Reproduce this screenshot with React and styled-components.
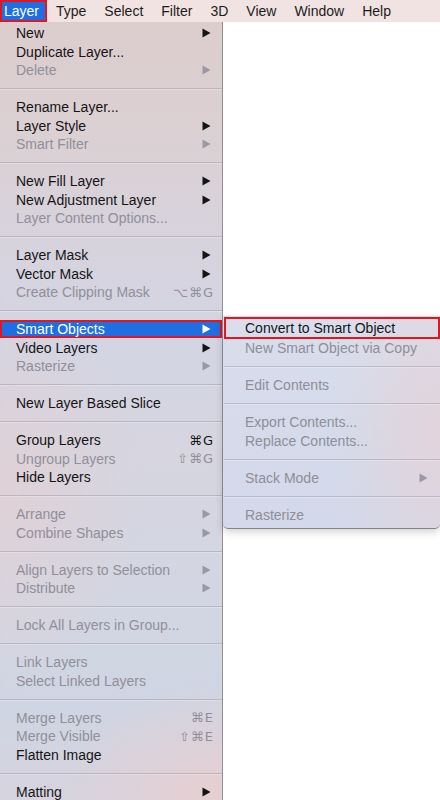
import React from "react";
import styled, { createGlobalStyle, css } from "styled-components";

const GlobalStyle = createGlobalStyle`
  html, body {
    margin: 0;
    padding: 0;
    background: #ffffff;
    overflow: hidden;
  }
  body {
    font-family: "Liberation Sans", Arial, sans-serif;
    -webkit-font-smoothing: antialiased;
  }
`;

const ROW = 18.5;
const HILITE = "#1f6fe2";
const OUTLINE = "#e3161f";

const Page = styled.div`
  width: 440px;
  height: 800px;
  display: flex;
  flex-direction: column;
  background: #ffffff;
`;

const MenuBar = styled.div`
  height: 22px;
  display: flex;
  align-items: center;
  background: #f2e3e3;
  font-size: 14px;
  color: #1c1c1c;
`;

const BarItem = styled.div`
  height: 22px;
  display: flex;
  align-items: center;
  padding: 0 9px;
  box-sizing: border-box;
  ${(p) =>
    p.$active &&
    css`
      padding: 0 8px 0 4px;
      width: 47px;
      background: ${HILITE};
      color: #ffffff;
      box-shadow: inset 0 0 0 2px ${OUTLINE};
    `}
`;

const Body = styled.div`
  flex: 1;
  display: flex;
`;

const MainMenu = styled.div`
  width: 223px;
  box-sizing: border-box;
  padding-top: 1.75px;
  border-right: 1px solid rgba(70, 60, 70, 0.45);
  background:
    radial-gradient(ellipse 160px 120px at 100% 100%, rgba(232, 206, 208, 0.95), rgba(232, 206, 208, 0)),
    radial-gradient(ellipse 140px 200px at 0% 470px, rgba(226, 208, 212, 0.8), rgba(226, 208, 212, 0)),
    linear-gradient(180deg, #dccdcd 0%, #dbd0d3 14%, #d6d3de 30%, #d3d5e3 42%, #d6d5e0 55%, #d3d6e2 72%, #cfd5e3 88%, #d6d3de 100%);
  font-size: 14px;
`;

const Row = styled.div`
  position: relative;
  height: ${ROW}px;
  display: flex;
  align-items: center;
  padding: 0 11px 0 16px;
  color: ${(p) => (p.$disabled ? "#918f9a" : "#151515")};
  white-space: nowrap;
  ${(p) =>
    p.$selected &&
    css`
      background: ${HILITE};
      color: #ffffff;
      box-shadow: inset 0 0 0 2px ${OUTLINE};
    `}
`;

const Label = styled.span`
  flex: 1;
`;

const Shortcut = styled.span`
  font-family: "DejaVu Sans", sans-serif;
  font-size: 13px;
  letter-spacing: 1px;
  margin-right: -3px;
`;

const Separator = styled.div`
  height: ${ROW}px;
  display: flex;
  align-items: center;
  &::after {
    content: "";
    flex: 1;
    height: 1px;
    background: rgba(120, 115, 130, 0.3);
    box-shadow: 0 1px 0 rgba(255, 255, 255, 0.25);
  }
`;

const SubMenu = styled.div`
  position: absolute;
  left: calc(100% + 1px);
  top: -3.75px;
  width: 217px;
  box-sizing: border-box;
  padding: 1px 0 4px 1px;
  border-radius: 0 0 5px 5px;
  border-bottom: 1px solid rgba(60, 55, 65, 0.55);
  box-shadow: 0 3px 8px rgba(0, 0, 0, 0.18);
  background:
    radial-gradient(ellipse 110px 200px at 100% 55%, rgba(228, 210, 216, 0.85), rgba(228, 210, 216, 0)),
    linear-gradient(180deg, #d9deec 0%, #d5dbeb 50%, #d3d9ea 100%);
  color: #151515;
  z-index: 2;
`;

const SubRow = styled.div`
  height: ${(p) => (p.$outlined ? 22 : ROW)}px;
  display: flex;
  align-items: center;
  padding: 0 12px 0 21px;
  color: ${(p) => (p.$disabled ? "#8f8e99" : "#151515")};
  white-space: nowrap;
  ${(p) =>
    p.$outlined &&
    css`
      box-shadow: inset 0 0 0 2px ${OUTLINE};
    `}
`;

const Arrow = ({ color }) => (
  <svg width="9" height="10" viewBox="0 0 9 10" style={{ display: "block" }}>
    <path d="M0.5 0.5 L8.5 5 L0.5 9.5 Z" fill={color} />
  </svg>
);

const subItems = [
  { label: "Convert to Smart Object", outlined: true },
  { label: "New Smart Object via Copy", disabled: true },
  { sep: true },
  { label: "Edit Contents", disabled: true },
  { sep: true },
  { label: "Export Contents...", disabled: true },
  { label: "Replace Contents...", disabled: true },
  { sep: true },
  { label: "Stack Mode", disabled: true, arrow: true },
  { sep: true },
  { label: "Rasterize", disabled: true },
];

const items = [
  { label: "New", arrow: true },
  { label: "Duplicate Layer..." },
  { label: "Delete", disabled: true, arrow: true },
  { sep: true },
  { label: "Rename Layer..." },
  { label: "Layer Style", arrow: true },
  { label: "Smart Filter", disabled: true, arrow: true },
  { sep: true },
  { label: "New Fill Layer", arrow: true },
  { label: "New Adjustment Layer", arrow: true },
  { label: "Layer Content Options...", disabled: true },
  { sep: true },
  { label: "Layer Mask", arrow: true },
  { label: "Vector Mask", arrow: true },
  { label: "Create Clipping Mask", disabled: true, shortcut: "⌥⌘G" },
  { sep: true },
  { label: "Smart Objects", arrow: true, selected: true, sub: subItems },
  { label: "Video Layers", arrow: true },
  { label: "Rasterize", disabled: true, arrow: true },
  { sep: true },
  { label: "New Layer Based Slice" },
  { sep: true },
  { label: "Group Layers", shortcut: "⌘G" },
  { label: "Ungroup Layers", disabled: true, shortcut: "⇧⌘G" },
  { label: "Hide Layers" },
  { sep: true },
  { label: "Arrange", disabled: true, arrow: true },
  { label: "Combine Shapes", disabled: true, arrow: true },
  { sep: true },
  { label: "Align Layers to Selection", disabled: true, arrow: true },
  { label: "Distribute", disabled: true, arrow: true },
  { sep: true },
  { label: "Lock All Layers in Group...", disabled: true },
  { sep: true },
  { label: "Link Layers", disabled: true },
  { label: "Select Linked Layers", disabled: true },
  { sep: true },
  { label: "Merge Layers", disabled: true, shortcut: "⌘E" },
  { label: "Merge Visible", disabled: true, shortcut: "⇧⌘E" },
  { label: "Flatten Image" },
  { sep: true },
  { label: "Matting", arrow: true },
];

const barItems = ["Layer", "Type", "Select", "Filter", "3D", "View", "Window", "Help"];

function arrowColor(item) {
  if (item.selected) return "#ffffff";
  return item.disabled ? "#9a98a3" : "#151515";
}

export default function App() {
  return (
    <Page>
      <GlobalStyle />
      <MenuBar>
        {barItems.map((name, i) => (
          <BarItem key={name} $active={i === 0}>
            {name}
          </BarItem>
        ))}
      </MenuBar>
      <Body>
        <MainMenu>
          {items.map((item, i) =>
            item.sep ? (
              <Separator key={i} />
            ) : (
              <Row key={i} $disabled={item.disabled} $selected={item.selected}>
                <Label>{item.label}</Label>
                {item.shortcut && <Shortcut>{item.shortcut}</Shortcut>}
                {item.arrow && <Arrow color={arrowColor(item)} />}
                {item.sub && (
                  <SubMenu>
                    {item.sub.map((s, j) =>
                      s.sep ? (
                        <Separator key={j} />
                      ) : (
                        <SubRow key={j} $disabled={s.disabled} $outlined={s.outlined}>
                          <Label>{s.label}</Label>
                          {s.arrow && <Arrow color="#9a98a3" />}
                        </SubRow>
                      )
                    )}
                  </SubMenu>
                )}
              </Row>
            )
          )}
        </MainMenu>
      </Body>
    </Page>
  );
}
